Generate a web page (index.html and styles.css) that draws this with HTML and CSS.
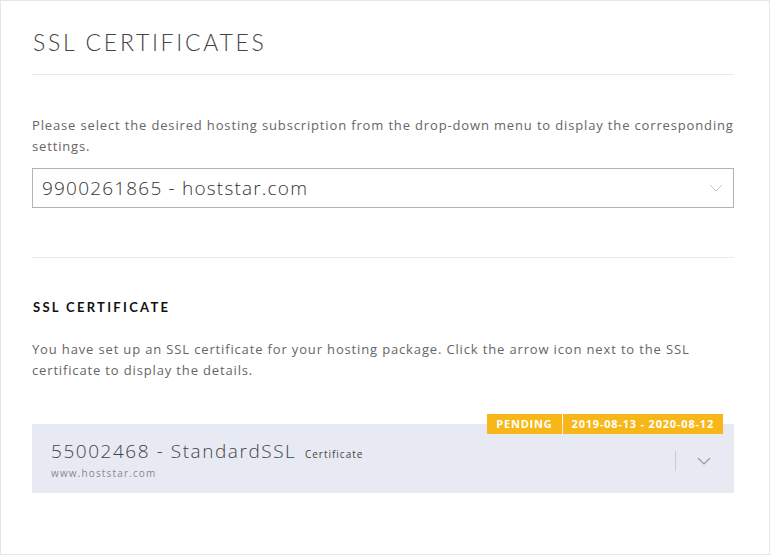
FILE: index.html
```html
<!DOCTYPE html>
<html lang="en">
<head>
    <meta charset="UTF-8">
    <title>SSL Certificates</title>
    <link rel="stylesheet" href="styles.css">
</head>
<body>
    <div class="panel">
        <h1 class="title">SSL CERTIFICATES</h1>

        <p class="intro">Please select the desired hosting subscription from the drop-down menu to display the corresponding settings.</p>

        <div class="select">
            <span>9900261865 - hoststar.com</span>
            <svg class="chevron light" width="14" height="8" viewBox="0 0 14 8"><path d="M1 1l6 6 6-6" fill="none" stroke="currentColor" stroke-width="1"/></svg>
        </div>

        <hr class="divider">

        <h2 class="subtitle">SSL CERTIFICATE</h2>
        <p class="intro">You have set up an SSL certificate for your hosting package. Click the arrow icon next to the SSL certificate to display the details.</p>

        <div class="cert">
            <div class="badges">
                <span class="badge">PENDING</span>
                <span class="badge">2019-08-13 - 2020-08-12</span>
            </div>
            <div class="cert-info">
                <div class="cert-name">55002468 - StandardSSL <small>Certificate</small></div>
                <div class="cert-domain">www.hoststar.com</div>
            </div>
            <div class="cert-toggle">
                <svg class="chevron" width="14" height="8" viewBox="0 0 14 8"><path d="M1 1l6 6 6-6" fill="none" stroke="currentColor" stroke-width="1.2"/></svg>
            </div>
        </div>
    </div>
</body>
</html>
```

FILE: styles.css
```css
body {
    margin: 0;
    font-family: 'Open Sans', sans-serif;
    background: #fff;
    color: #555;
}
.panel {
    width: 770px;
    height: 555px;
    padding: 0 35px 0 31px;
    border: 1px solid #e6e6e6;
    box-sizing: border-box;
}
.title {
    margin: 0;
    padding: 29px 0 20px 1px;
    font-family: 'Lato', sans-serif;
    font-size: 23px;
    font-weight: 300;
    letter-spacing: 2.7px;
    color: #444;
    line-height: 24px;
    border-bottom: 1px solid #e8e8e8;
}
.intro {
    margin: 0;
    font-size: 13px;
    line-height: 21px;
    letter-spacing: 0.85px;
    color: #666;
}
.title + .intro {
    margin-top: 40px;
}
.select {
    margin-top: 11px;
    height: 40px;
    border: 1px solid #b3b3b3;
    box-sizing: border-box;
    display: flex;
    align-items: center;
    justify-content: space-between;
    padding: 0 10px 0 9px;
    font-size: 19px;
    font-weight: 300;
    color: #333;
    letter-spacing: 1.2px;
}
.chevron {
    color: #999;
}
.chevron.light {
    color: #c4c4c4;
}
.divider {
    margin: 49px 0 0;
    border: none;
    border-top: 1px solid #ebebeb;
}
.subtitle {
    margin: 41px 0 0 1px;
    font-family: 'Lato', sans-serif;
    font-size: 13px;
    font-weight: 700;
    letter-spacing: 2.3px;
    color: #111;
    line-height: 16px;
}
.subtitle + .intro {
    margin-top: 24px;
}
.cert {
    position: relative;
    margin-top: 43px;
    height: 69px;
    background: #e8eaf3;
    display: flex;
    align-items: center;
    padding: 0 20px 0 19px;
}
.badges {
    position: absolute;
    top: -10px;
    right: 11px;
    display: flex;
    gap: 1px;
}
.badge {
    background: #f7b719;
    color: #fff;
    font-size: 11px;
    font-weight: 700;
    letter-spacing: 0.8px;
    line-height: 20px;
    padding: 0 9px;
}
.cert-info {
    flex: 1;
    padding-top: 2px;
}
.cert-name {
    font-size: 19px;
    font-weight: 300;
    color: #444;
    letter-spacing: 1.55px;
    line-height: 24px;
}
.cert-name small {
    font-size: 10px;
    font-weight: 400;
    letter-spacing: 1px;
    margin-left: 2px;
}
.cert-domain {
    font-size: 10px;
    line-height: 14px;
    letter-spacing: 1.15px;
    color: #888;
}
.cert-toggle {
    border-left: 1px solid #c9ccd6;
    height: 20px;
    padding-left: 21px;
    padding-right: 3px;
    display: flex;
    align-items: center;
    margin-top: 4px;
}
```
